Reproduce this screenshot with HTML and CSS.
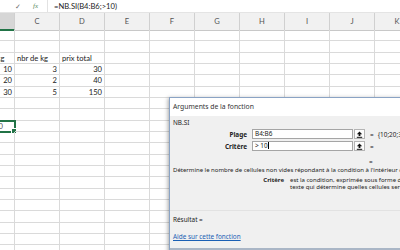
FILE: index.html
```html
<!DOCTYPE html>
<html lang="fr">
<head>
  <meta charset="UTF-8" />
  <title>Classeur</title>
  <link rel="stylesheet" href="styles.css">
</head>
<body>
  <div class="formula-bar">
    <div class="fb-icons">
      <span class="check">✓</span>
      <span class="fx">fx</span>
    </div>
    <div class="fb-input">=NB.SI(B4:B6;&gt;10)</div>
  </div>

  <div class="sheet" id="sheet"></div>

  <div class="dialog">
    <div class="dlg-title">Arguments de la fonction</div>
    <div class="dlg-body">
      <div class="fn-name">NB.SI</div>

      <div class="arg">
        <span class="arg-label">Plage</span>
        <span class="arg-input">B4:B6</span>
        <span class="arg-btn"><svg width="7" height="7" viewBox="0 0 7 7"><path d="M3.5 0.5 L0.8 3.3 H2.6 V5 H4.4 V3.3 H6.2 Z" fill="#111"/><rect x="0.8" y="5.8" width="5.4" height="1" fill="#111"/></svg></span>
        <span class="arg-eq">=</span>
        <span class="arg-val">{10;20;30}</span>
      </div>
      <div class="arg">
        <span class="arg-label">Critère</span>
        <span class="arg-input">&gt; 10<i class="caret"></i></span>
        <span class="arg-btn"><svg width="7" height="7" viewBox="0 0 7 7"><path d="M3.5 0.5 L0.8 3.3 H2.6 V5 H4.4 V3.3 H6.2 Z" fill="#111"/><rect x="0.8" y="5.8" width="5.4" height="1" fill="#111"/></svg></span>
        <span class="arg-eq">=</span>
        <span class="arg-val"></span>
      </div>

      <div class="result-eq">=</div>
      <div class="desc">Détermine le nombre de cellules non vides répondant à la condition à l'intérieur de la plage.</div>
      <div class="arg-help">
        <span class="help-label">Critère</span>
        <span class="help-text">est la condition, exprimée sous forme de nombre, d'expression ou de texte qui détermine quelles cellules seront comptées.</span>
      </div>

      <div class="sep"></div>
      <div class="result">Résultat =</div>
      <a class="help-link" href="#">Aide sur cette fonction</a>
    </div>
    <div class="dlg-foot"></div>
  </div>

  <script>
    const cols = ["B", "C", "D", "E", "F", "G", "H", "I", "J", "K"];
    const data = {
      3: ["prix au kg", "nbr de kg", "prix total"],
      4: [10, 3, 30],
      5: [20, 2, 40],
      6: [30, 5, 150]
    };

    const sheet = document.getElementById('sheet');
    let html = '<div class="row head">' + cols.map(c =>
      `<div class="cell${c === 'B' ? ' sel-col' : ''}">${c}</div>`).join('') + '</div>';

    for (let r = 1; r <= 20; r++) {
      const vals = data[r] || [];
      html += '<div class="row">' + cols.map((c, i) => {
        const v = vals[i];
        let cls = 'cell';
        if (typeof v === 'number') cls += ' num';
        if (r === 9 && c === 'B') cls += ' active';
        const txt = v === undefined ? (r === 9 && c === 'B' ? '0' : '') : v;
        return `<div class="${cls}">${txt}</div>`;
      }).join('') + '</div>';
    }
    sheet.innerHTML = html;
  </script>
</body>
</html>
```

FILE: styles.css
```css
body {
  margin: 0;
  width: 400px;
  height: 250px;
  overflow: hidden;
  background: #fff;
  font-family: 'Lato', 'Liberation Sans', sans-serif;
  position: relative;
}

.formula-bar {
  display: flex;
  height: 12px;
  background: #fff;
  align-items: center;
}

.fb-icons {
  width: 48px;
  display: flex;
  align-items: center;
  border-right: 1px solid #e2e2e2;
  height: 12px;
  box-sizing: border-box;
}

.check {
  margin-left: 15px;
  font-size: 7px;
  color: #6a6a6a;
}

.fx {
  margin-left: 12px;
  font-family: 'Liberation Serif', serif;
  font-style: italic;
  font-size: 7px;
  color: #5b8a64;
}

.fb-input {
  padding-left: 6px;
  font-size: 7.6px;
  color: #222;
}

.sheet {
  margin-left: -30px;
}

.row {
  display: grid;
  grid-template-columns: repeat(10, 45px);
  height: 11px;
}

.row:nth-child(3n) {
  height: 12px;
}

.cell {
  box-sizing: border-box;
  border-right: 1px solid #dadada;
  border-bottom: 1px solid #dadada;
  font-size: 7.6px;
  color: #222;
  padding: 0 2px;
  line-height: 10px;
  white-space: nowrap;
  position: relative;
}

.num {
  text-align: right;
}

.row.head {
  height: 18px;
  background: #f1f1f1;
  border-top: 1px solid #e4e4e4;
  box-sizing: border-box;
}

.row.head .cell {
  text-align: center;
  line-height: 16px;
  color: #555;
  border-right: 1px solid #d0d0d0;
  border-bottom: 1px solid #c8c8c8;
}

.row.head .sel-col {
  background: #d6d6d6;
  border-bottom: 2px solid #217346;
  color: #333;
}

.active {
  text-align: right;
  padding-right: 11px;
  outline: 2px solid #217346;
  outline-offset: -1px;
  color: #555;
}

.active::after {
  content: "";
  position: absolute;
  right: -3px;
  bottom: -3px;
  width: 4px;
  height: 4px;
  background: #217346;
  border: 1px solid #fff;
}

/* function arguments dialog */
.dialog {
  position: absolute;
  left: 169px;
  top: 97px;
  width: 260px;
  height: 170px;
  background: #f0f0f0;
  border: 1px solid #8aa3c4;
  box-shadow: -1px 1px 4px rgba(0, 0, 0, 0.35);
  font-family: 'Noto Sans', 'Open Sans', sans-serif;
  font-size: 6.4px;
  color: #222;
}

.dlg-title {
  height: 18px;
  line-height: 18px;
  background: #fff;
  padding-left: 3px;
  font-size: 6.8px;
  color: #333;
}

.dlg-body {
  padding: 0 0 0 3px;
}

.fn-name {
  margin-top: 2px;
  line-height: 9px;
}

.arg {
  display: flex;
  align-items: center;
  height: 10px;
  margin-top: 2px;
}

.arg:first-of-type {
  margin-top: 4px;
}

.arg-label {
  width: 74px;
  text-align: right;
  font-weight: bold;
  padding-right: 2px;
}

.arg-input {
  box-sizing: border-box;
  margin-left: 3px;
  width: 101px;
  height: 10px;
  line-height: 8px;
  background: #fff;
  border: 1px solid #a5a5a5;
  padding-left: 2px;
}

.caret {
  display: inline-block;
  width: 1px;
  height: 7px;
  background: #000;
  vertical-align: -1px;
}

.arg-btn {
  box-sizing: border-box;
  margin-left: 1px;
  width: 11px;
  height: 10px;
  background: #fdfdfd;
  border: 1px solid #b4b4b4;
  display: flex;
  align-items: center;
  justify-content: center;
}

.arg-eq {
  margin-left: 5px;
}

.arg-val {
  margin-left: 4px;
}

.result-eq {
  margin-left: 196px;
  margin-top: 6px;
  line-height: 9px;
}

.desc {
  white-space: nowrap;
  line-height: 9px;
  font-size: 6px;
}

.arg-help {
  display: flex;
  margin-top: 2px;
  font-size: 6px;
  line-height: 7px;
}

.help-label {
  width: 111px;
  text-align: right;
  font-weight: bold;
  flex: none;
}

.help-text {
  margin-left: 6px;
  width: 200px;
  flex: none;
}

.sep {
  margin-top: 19px;
  height: 1px;
  background: #e2e2e2;
  margin-left: -3px;
}

.result {
  margin-top: 4px;
  line-height: 9px;
}

.help-link {
  display: block;
  margin-top: 8px;
  line-height: 9px;
  color: #1a5fb4;
}

.dlg-foot {
  position: absolute;
  left: 0;
  right: 0;
  top: 150px;
  height: 4px;
  background: #aab6c6;
}
```
